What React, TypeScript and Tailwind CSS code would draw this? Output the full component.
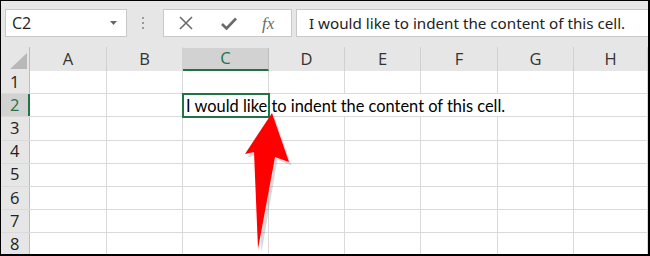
const columns = [
  { key: "A", w: "w-[77px]" },
  { key: "B", w: "w-[76px]" },
  { key: "C", w: "w-[86px]" },
  { key: "D", w: "w-[76px]" },
  { key: "E", w: "w-[76px]" },
  { key: "F", w: "w-[77px]" },
  { key: "G", w: "w-[76px]" },
  { key: "H", w: "flex-1" },
];

const rows = [1, 2, 3, 4, 5, 6, 7, 8];

const cellText = "I would like to indent the content of this cell.";

function Toolbar() {
  return (
    <div className="flex h-[46px] items-start bg-[#e6e6e6] pt-[8px]">
      {/* Name box */}
      <div className="ml-[4px] flex h-[28px] w-[122px] items-center justify-between border border-[#c8c8c8] bg-white pl-[6px] pr-[9px]">
        <span className="text-[16px] text-[#222]" style={{ fontFamily: "'Open Sans', sans-serif" }}>C2</span>
        <svg width="7" height="4" viewBox="0 0 7 4">
          <path d="M0 0 L7 0 L3.5 4 Z" fill="#666" />
        </svg>
      </div>

      {/* grip dots */}
      <div className="ml-[14px] flex h-[28px] w-[4px] flex-col items-center justify-center gap-[3px]">
        <span className="h-[2px] w-[2px] bg-[#9a9a9a]" />
        <span className="h-[2px] w-[2px] bg-[#9a9a9a]" />
        <span className="h-[2px] w-[2px] bg-[#9a9a9a]" />
      </div>

      {/* cancel / enter / fx */}
      <div className="ml-[18px] flex h-[28px] w-[129px] items-center border border-[#c8c8c8] bg-white">
        <svg className="ml-[15px]" width="14" height="14" viewBox="0 0 14 14">
          <path d="M1 1 L13 13 M13 1 L1 13" stroke="#6a6a6a" strokeWidth="1.6" />
        </svg>
        <svg className="ml-[28px]" width="16" height="13" viewBox="0 0 16 13">
          <path d="M1 7 L5.5 11.5 L15 1.5" stroke="#6a6a6a" strokeWidth="2.6" fill="none" />
        </svg>
        <span
          className="ml-[25px] text-[17px] italic leading-none text-[#6a6a6a]"
          style={{ fontFamily: "'Liberation Serif', serif" }}
        >
          fx
        </span>
      </div>

      {/* formula text */}
      <div className="ml-[4px] flex h-[28px] flex-1 items-center border border-r-0 border-[#c8c8c8] bg-white pl-[12px]">
        <span className="whitespace-nowrap text-[15.2px] text-[#222]" style={{ fontFamily: "'Noto Sans', sans-serif" }}>
          {cellText}
        </span>
      </div>
    </div>
  );
}

function HeaderRow() {
  return (
    <div className="flex h-[24px] bg-[#e6e6e6]">
      <div className="relative w-[29px] shrink-0 border-r border-[#bdbdbd]">
        <svg className="absolute bottom-[2px] right-[2px]" width="17" height="16" viewBox="0 0 17 16">
          <path d="M17 0 L17 16 L0 16 Z" fill="#b8b8b8" />
        </svg>
      </div>
      {columns.map((c) => {
        const active = c.key === "C";
        return (
          <div
            key={c.key}
            className={`${c.w} shrink-0 flex items-center justify-center border-r text-[16.5px] ${
              active
                ? "mt-[1px] border-b-2 border-r-[#bdbdbd] border-b-[#217346] bg-[#d2d2d2] text-[#217346]"
                : "border-[#d0d0d0] text-[#333]"
            }`}
            style={{ fontFamily: "'Open Sans', sans-serif" }}
          >
            {c.key}
          </div>
        );
      })}
    </div>
  );
}

function Row({ n }: { n: number }) {
  const active = n === 2;
  return (
    <div className="flex h-[23.2px] border-b border-[#dadada]">
      <div
        className={`flex w-[29px] shrink-0 items-center pl-[9px] text-[16.5px] ${
          active ? "border-r-2 border-[#217346] bg-[#d2d2d2] text-[#217346]" : "border-r border-[#bdbdbd] bg-[#e6e6e6] text-[#222]"
        }`}
        style={{ fontFamily: "'Open Sans', sans-serif" }}
      >
        {n}
      </div>
      {columns.map((c) => {
        if (active && c.key === "C") {
          return (
            <div key={c.key} className={`${c.w} relative shrink-0`}>
              <div className="absolute -left-[1px] -top-[1px] h-[25px] w-[88px] border-2 border-[#217346]" />
              <span
                className="absolute left-[3px] top-[1px] z-10 whitespace-nowrap text-[16.4px] leading-[22px] text-black"
                style={{ fontFamily: "Lato, sans-serif" }}
              >
                {cellText}
              </span>
            </div>
          );
        }
        const hidden = active && (c.key === "D" || c.key === "E" || c.key === "F");
        return (
          <div
            key={c.key}
            className={`${c.w} shrink-0 ${hidden ? "" : "border-r border-[#dadada]"}`}
          />
        );
      })}
    </div>
  );
}

export default function App() {
  return (
    <div className="relative h-[256px] w-[650px] overflow-hidden border-t border-l border-r-2 border-b-2 border-black bg-white">
      <Toolbar />
      <HeaderRow />
      {rows.map((n) => (
        <Row key={n} n={n} />
      ))}

      {/* red arrow callout */}
      <svg className="absolute left-0 top-0" width="650" height="256" viewBox="0 0 650 256">
        <polygon
          points="272,114 289,163 275,157 259,250 255,152 245,155"
          fill="#5a6b78"
          opacity="0.25"
          transform="translate(1.5,1.5)"
        />
        <polygon points="271,112 288,161 274,156 257,248 253,151 244,153" fill="#ff0000" />
      </svg>
    </div>
  );
}
